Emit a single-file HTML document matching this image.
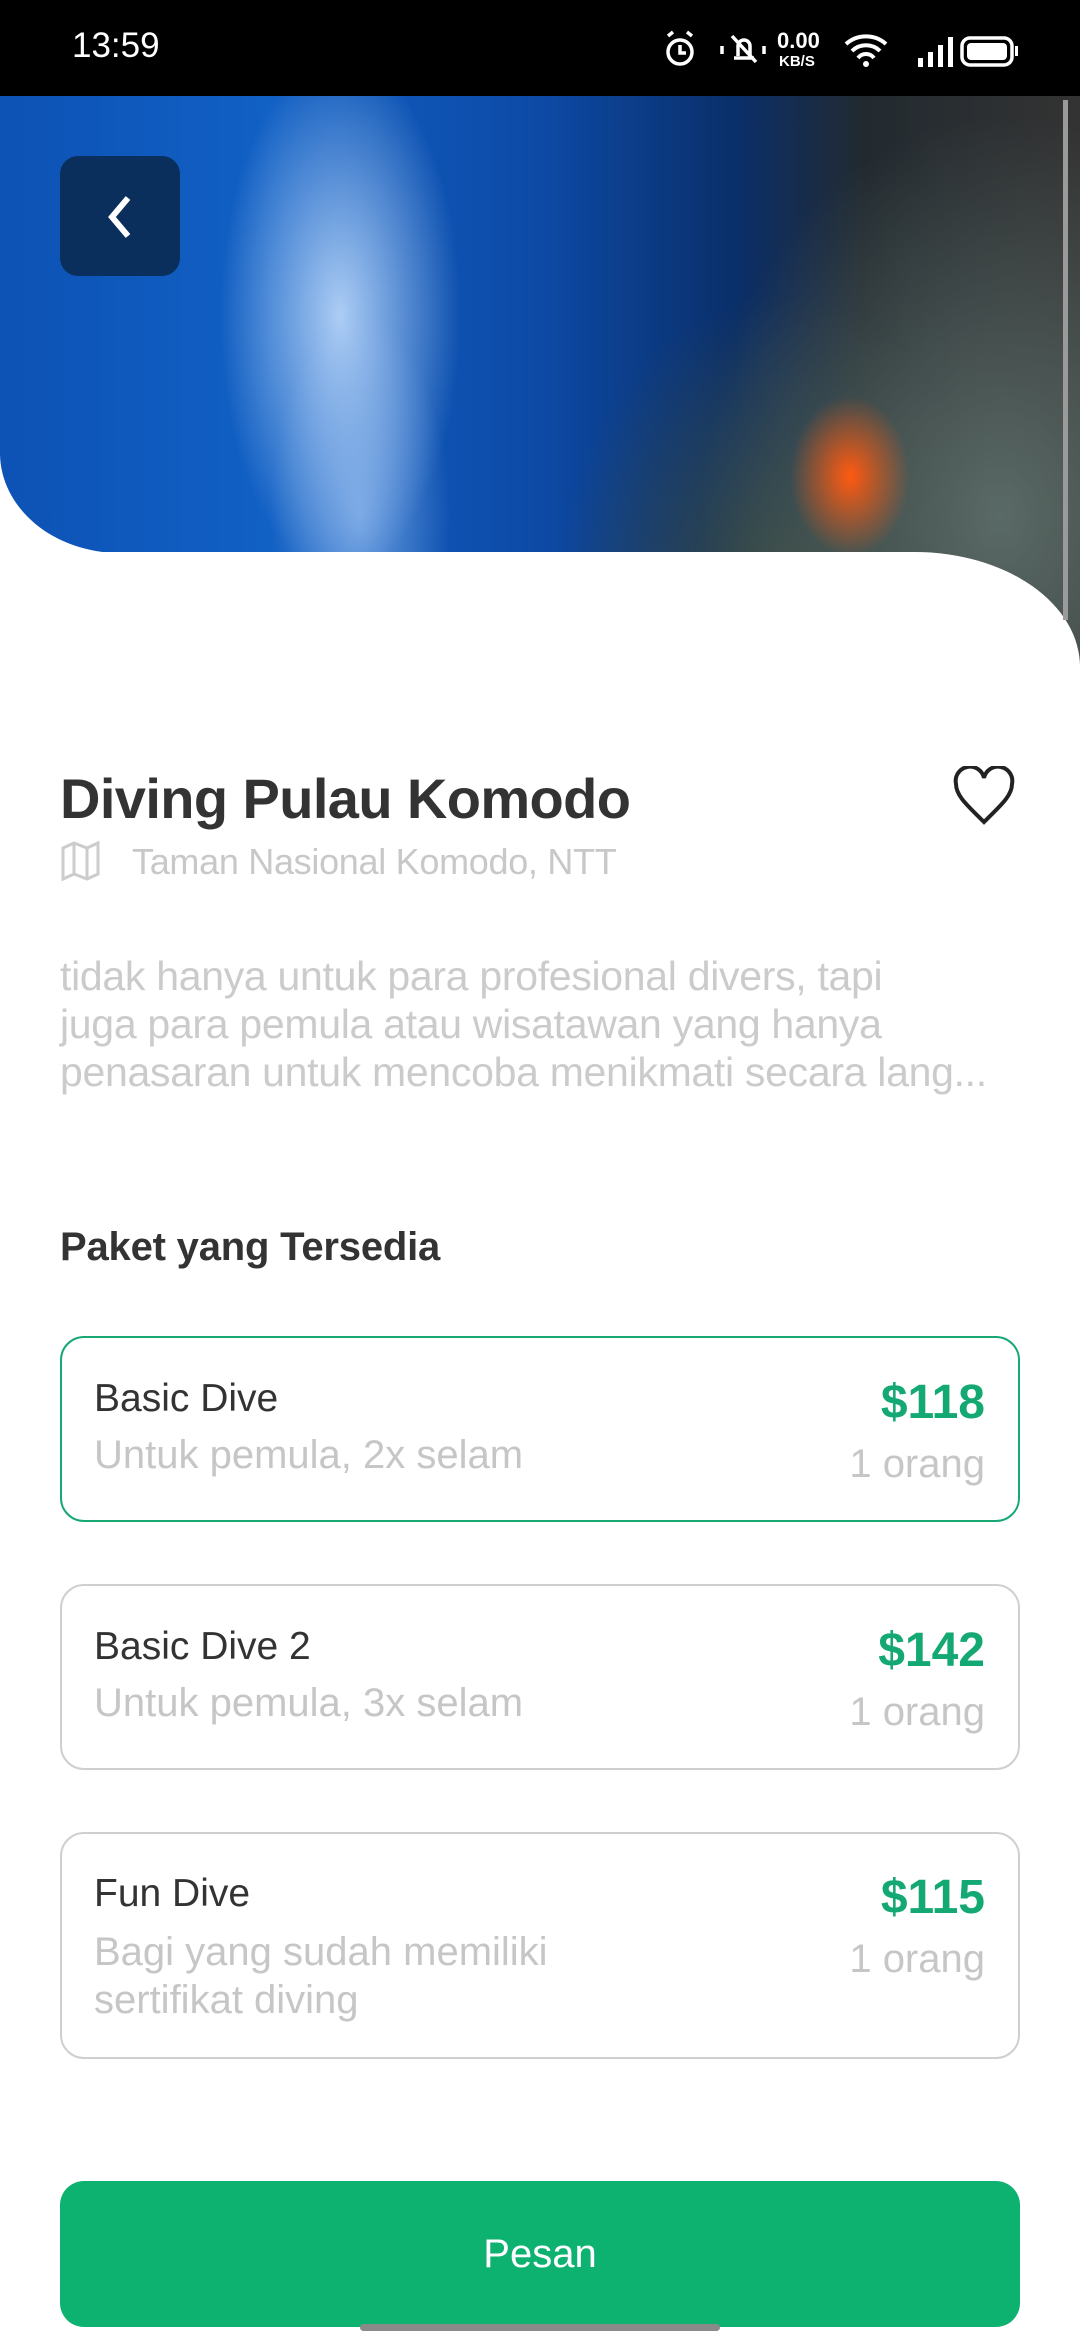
<!DOCTYPE html>
<html><head><meta charset="utf-8"><style>
*{margin:0;padding:0;box-sizing:border-box}
body{width:1080px;height:2340px;position:relative;background:#fff;font-family:"Liberation Sans",sans-serif;overflow:hidden}
.a{position:absolute;white-space:nowrap}
.img{background:
radial-gradient(ellipse 120px 260px at 340px 220px,rgba(200,225,255,.85),rgba(120,170,240,0) 100%),
radial-gradient(ellipse 90px 200px at 360px 420px,rgba(170,205,250,.6),rgba(120,170,240,0) 100%),
radial-gradient(ellipse 60px 80px at 850px 380px,#ff5a10,rgba(255,90,16,0) 100%),
radial-gradient(ellipse 300px 400px at 1000px 420px,#5a6a66,rgba(40,50,60,0) 100%),
radial-gradient(ellipse 220px 300px at 780px 500px,#3a4a40,rgba(30,40,40,0) 100%),
linear-gradient(90deg,#0d52b5 0%,#1160c4 25%,#0d4aa6 50%,#0a2f6a 68%,#222a30 80%,#333 100%)}
.card{position:absolute;left:60px;width:960px;border:2px solid #cfcfcf;border-radius:24px}
.t{font-size:39px;color:#333}
.s{font-size:40px;color:#c6c6c6}
.p{font-size:48px;font-weight:bold;color:#14a873}
</style></head><body>
<div class="a" style="left:0;top:0;width:1080px;height:96px;background:#000"></div>
<div class="a" style="left:72px;top:26px;color:#fff;font-size:35px">13:59</div>
<svg class="a" style="left:660px;top:28px" width="360" height="42" viewBox="0 0 360 42">
<g fill="none" stroke="#fff" stroke-width="3.5">
<circle cx="20" cy="24" r="12"/><path d="M20 17v8h6M8 8l5-4M32 8l-5-4"/>
<path d="M74 30h20M78 28v-10a6 6 0 0 1 12 0v10M72 8l24 26M62 18v8M104 18v8"/>
</g>
<text x="117" y="20" fill="#fff" font-size="22" font-weight="bold" font-family="Liberation Sans">0.00</text>
<text x="119" y="38" fill="#fff" font-size="15" font-weight="bold" font-family="Liberation Sans">KB/S</text>
<path d="M186 16a30 30 0 0 1 40 0M192 23a20 20 0 0 1 28 0M198 30a10 10 0 0 1 16 0" stroke="#fff" stroke-width="4" fill="none"/><circle cx="206" cy="36" r="3" fill="#fff"/>
<g fill="#fff"><rect x="258" y="30" width="5" height="9"/><rect x="268" y="24" width="5" height="15"/><rect x="278" y="17" width="5" height="22"/><rect x="288" y="9" width="5" height="30"/></g>
<rect x="302" y="10" width="50" height="27" rx="8" fill="none" stroke="#fff" stroke-width="3.5"/><rect x="307" y="15" width="40" height="17" rx="4" fill="#fff"/><rect x="355" y="18" width="3" height="10" fill="#fff"/>
</svg>
<div class="a img" style="left:0;top:96px;width:1080px;height:568px"></div>
<div class="a" style="left:0;top:455px;width:200px;height:120px;background:#fff"></div>
<div class="a img" style="left:0;top:96px;width:1080px;height:457px;border-bottom-left-radius:120px 100px;background-size:1080px 568px"></div>
<div class="a" style="left:0;top:552px;width:1080px;height:200px;background:#fff;border-top-right-radius:165px 115px"></div>
<div class="a" style="left:1063px;top:100px;width:5px;height:520px;background:#9a9a9a"></div>
<div class="a" style="left:60px;top:156px;width:120px;height:120px;background:#0b2f5c;border-radius:18px"></div>
<svg class="a" style="left:100px;top:192px" width="40" height="50"><path d="M28 6L12 25l16 19" stroke="#fff" stroke-width="6" fill="none"/></svg>

<div class="a" style="left:60px;top:766px;font-size:56px;font-weight:bold;color:#333;letter-spacing:-0.6px">Diving Pulau Komodo</div>
<svg class="a" style="left:952px;top:766px" width="64" height="60" viewBox="0 0 64 60"><path d="M32 56C16 40 4 30 4 18A13 13 0 0 1 32 12A13 13 0 0 1 60 18C60 30 48 40 32 56Z" fill="none" stroke="#222" stroke-width="4"/></svg>
<svg class="a" style="left:60px;top:840px" width="42" height="42" viewBox="0 0 42 42"><path d="M3 8l11-5 13 5 11-5v31l-11 5-13-5-11 5zM14 3v31M27 8v31" fill="none" stroke="#ccc" stroke-width="3"/></svg>
<div class="a" style="left:132px;top:841px;font-size:36px;color:#c8c8c8;letter-spacing:-0.3px">Taman Nasional Komodo, NTT</div>

<div class="a" style="left:60px;top:952px;font-size:41px;line-height:48px;color:#cbcbcb;white-space:nowrap;letter-spacing:-0.3px">tidak hanya untuk para profesional divers, tapi<br>juga para pemula atau wisatawan yang hanya<br>penasaran untuk mencoba menikmati secara lang...</div>

<div class="a" style="left:60px;top:1225px;font-size:40px;font-weight:bold;color:#333;letter-spacing:-0.2px">Paket yang Tersedia</div>

<div class="card" style="top:1336px;height:186px;border-color:#18a874"></div>
<div class="a t" style="left:94px;top:1377px">Basic Dive</div>
<div class="a s" style="left:94px;top:1433px">Untuk pemula, 2x selam</div>
<div class="a p" style="right:95px;top:1375px">$118</div>
<div class="a s" style="right:95px;top:1442px">1 orang</div>

<div class="card" style="top:1584px;height:186px"></div>
<div class="a t" style="left:94px;top:1625px">Basic Dive 2</div>
<div class="a s" style="left:94px;top:1681px">Untuk pemula, 3x selam</div>
<div class="a p" style="right:95px;top:1623px">$142</div>
<div class="a s" style="right:95px;top:1690px">1 orang</div>

<div class="card" style="top:1832px;height:227px"></div>
<div class="a t" style="left:94px;top:1872px">Fun Dive</div>
<div class="a s" style="left:94px;top:1928px;line-height:48px">Bagi yang sudah memiliki<br>sertifikat diving</div>
<div class="a p" style="right:95px;top:1870px">$115</div>
<div class="a s" style="right:95px;top:1937px">1 orang</div>

<div class="a" style="left:60px;top:2181px;width:960px;height:146px;background:#0db270;border-radius:24px;color:#fff;font-size:40px;text-align:center;line-height:146px">Pesan</div>
<div class="a" style="left:360px;top:2324px;width:360px;height:7px;background:#8a8a8a;border-radius:4px"></div>
</body></html>
